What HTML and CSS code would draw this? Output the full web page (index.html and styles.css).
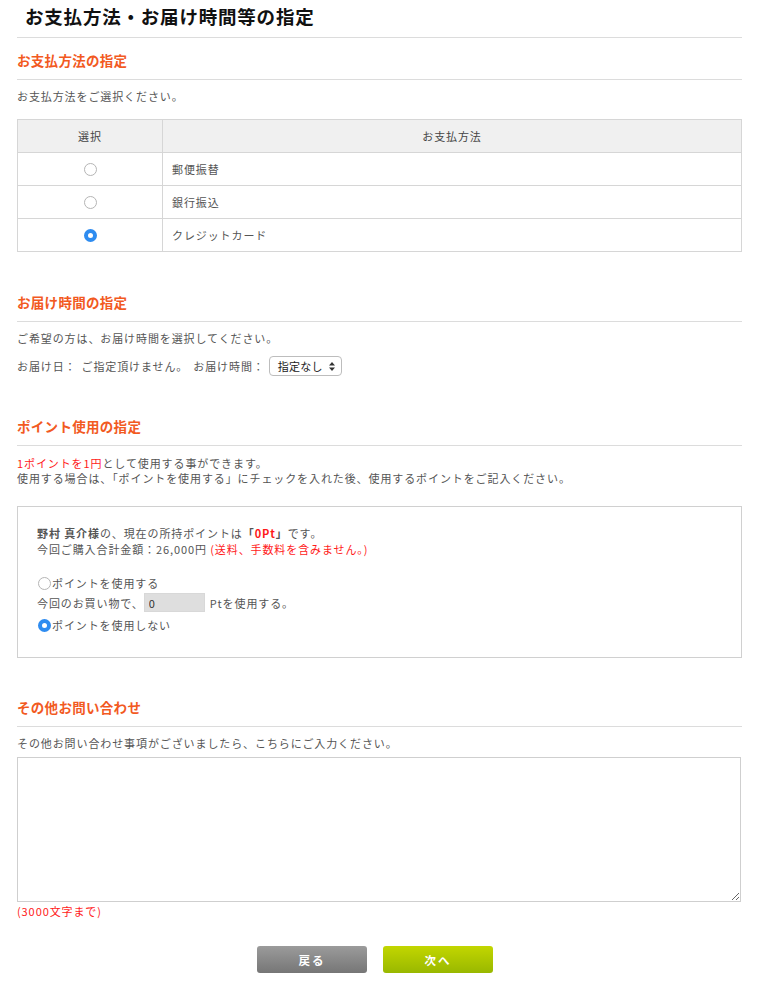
FILE: index.html
```html
<!DOCTYPE html>
<html lang="ja">

<head>
    <meta charset="UTF-8">
    <meta name="viewport" content="width=device-width, initial-scale=1.0">
    <title>お支払方法・お届け時間等の指定</title>
    <link rel="stylesheet" href="styles.css">
</head>

<body>
    <div class="main">
        <h1 class="page_title">お支払方法・お届け時間等の指定</h1>

        <!-- お支払方法 -->
        <div class="section">
            <h2 class="sec_title">お支払方法の指定</h2>
            <p class="note">お支払方法をご選択ください。</p>
            <table class="pay_table">
                <tr>
                    <th class="col_select">選択</th>
                    <th>お支払方法</th>
                </tr>
                <tr>
                    <td class="col_select"><input type="radio" name="payment"></td>
                    <td>郵便振替</td>
                </tr>
                <tr>
                    <td class="col_select"><input type="radio" name="payment"></td>
                    <td>銀行振込</td>
                </tr>
                <tr>
                    <td class="col_select"><input type="radio" name="payment" checked></td>
                    <td>クレジットカード</td>
                </tr>
            </table>
        </div>

        <!-- お届け時間 -->
        <div class="section">
            <h2 class="sec_title">お届け時間の指定</h2>
            <p class="note">ご希望の方は、お届け時間を選択してください。</p>
            <div class="deliv_row">
                <span>お届け日：</span>
                <span class="deliv_date">ご指定頂けません。</span>
                <span class="deliv_time">お届け時間：</span>
                <span class="fake_select">
                    指定なし
                    <svg width="6" height="9" viewBox="0 0 6 9">
                        <path d="M3 0 L6 3.5 L0 3.5 Z M3 9 L6 5.5 L0 5.5 Z" fill="#333" />
                    </svg>
                </span>
            </div>
        </div>

        <!-- ポイント -->
        <div class="section point_sec">
            <h2 class="sec_title">ポイント使用の指定</h2>
            <p class="note">
                <span class="red">1ポイントを1円</span>として使用する事ができます。<br>
                使用する場合は、「ポイントを使用する」にチェックを入れた後、使用するポイントをご記入ください。
            </p>
            <div class="point_box">
                <p class="point_info">
                    <b>野村 真介様</b>の、現在の所持ポイントは<b>「<span class="red">0Pt</span>」</b>です。<br>
                    今回ご購入合計金額：26,000円 <span class="red">(送料、手数料を含みません。)</span>
                </p>
                <label class="point_radio"><input type="radio" name="point">ポイントを使用する</label>
                <div class="point_use">
                    今回のお買い物で、<input type="text" class="point_input" value="0">Ptを使用する。
                </div>
                <label class="point_radio"><input type="radio" name="point" checked>ポイントを使用しない</label>
            </div>
        </div>

        <!-- その他 -->
        <div class="section other_sec">
            <h2 class="sec_title">その他お問い合わせ</h2>
            <p class="note">その他お問い合わせ事項がございましたら、こちらにご入力ください。</p>
            <textarea class="message"></textarea>
            <p class="limit red">(3000文字まで)</p>
        </div>

        <div class="buttons">
            <button class="btn btn_back">戻る</button>
            <button class="btn btn_next">次へ</button>
        </div>
    </div>
</body>

</html>
```

FILE: styles.css
```css
html,
body {
    margin: 0;
    padding: 0;
    background: #fff;
}

:root {
    --theme-color: #f25a1f;
    --text-color: #555;
    --line-color: #dcdcdc;
    --red: #ff1a1a;
}

.main {
    width: 725px;
    padding: 0 19px 0 17px;
    font-family: "Noto Sans CJK JP", "Noto Sans", sans-serif;
    color: var(--text-color);
    font-size: 11px;
    letter-spacing: 0.9px;
}

.page_title {
    margin: 0;
    padding: 5px 0 9px 8px;
    font-size: 18.5px;
    line-height: 23px;
    letter-spacing: 0.8px;
    color: #111;
    border-bottom: 1px solid var(--line-color);
}

.section {
    margin-top: 40px;
}

.section:first-of-type {
    margin-top: 12px;
}

.sec_title {
    margin: 0;
    padding-bottom: 9px;
    font-size: 13.5px;
    line-height: 20px;
    letter-spacing: 0.3px;
    color: var(--theme-color);
    border-bottom: 1px solid var(--line-color);
}

.note {
    margin: 9px 0 0;
    line-height: 15px;
}

.red {
    color: var(--red);
}

/* payment table */
.pay_table {
    width: 100%;
    margin-top: 15px;
    border-collapse: collapse;
    border: 1px solid #d6d6d6;
}

.pay_table th,
.pay_table td {
    height: 32px;
    padding: 0 9px;
    border: 1px solid #d6d6d6;
    font-weight: normal;
    text-align: left;
}

.pay_table th {
    background: #f0f0f0;
    text-align: center;
    color: #444;
}

.pay_table .col_select {
    width: 126px;
    text-align: center;
}

input[type="radio"] {
    appearance: none;
    -webkit-appearance: none;
    width: 13px;
    height: 13px;
    margin: 0;
    border: 1px solid #b5b5b5;
    border-radius: 50%;
    background: #fff;
    vertical-align: middle;
    box-sizing: border-box;
}

input[type="radio"]:checked {
    border: 4px solid #2e8cf0;
    background: #fff;
}

.pay_table input[type="radio"] {
    position: relative;
    top: -1px;
}

/* delivery */
.deliv_row {
    display: flex;
    align-items: center;
    margin-top: 10px;
    height: 20px;
}

.deliv_date {
    margin-left: 5px;
}

.deliv_time {
    margin-left: 5px;
    margin-right: 4px;
}

.fake_select {
    display: inline-flex;
    align-items: center;
    justify-content: space-between;
    box-sizing: border-box;
    width: 73px;
    height: 20px;
    padding: 0 6px 0 8px;
    border: 1px solid #bdbdbd;
    border-radius: 4px;
    background: #fff;
    color: #222;
    letter-spacing: 0.3px;
}

/* point */
.point_sec .note {
    margin-top: 10px;
}

.point_box {
    margin-top: 20px;
    padding: 18px 19px 20px;
    border: 1px solid #d0d0d0;
    height: 112px;
}

.point_info {
    margin: 0;
    line-height: 16px;
}

.point_info b {
    font-weight: bold;
}

.point_radio {
    display: flex;
    align-items: center;
    height: 18px;
}

.point_radio:first-of-type {
    margin-top: 17px;
}

.point_radio input {
    margin: 0 1px 0 1px;
}

.point_use {
    display: flex;
    align-items: center;
    height: 21px;
    margin-bottom: 3px;
}

.point_input {
    box-sizing: border-box;
    width: 61px;
    height: 19px;
    margin: 0 5px 0 0;
    padding: 0 4px;
    border: 1px solid #d8d8d8;
    background: #dedede;
    font-family: inherit;
    font-size: 11px;
    color: #333;
}

/* message */
.other_sec {
    margin-top: 39px;
}

.message {
    display: block;
    box-sizing: border-box;
    width: 724px;
    height: 145px;
    margin-top: 6px;
    border: 1px solid #cfcfcf;
    font-family: inherit;
}

.limit {
    margin: 2px 0 0;
    line-height: 15px;
}

.buttons {
    display: flex;
    justify-content: center;
    gap: 16px;
    margin-top: 27px;
    padding-right: 9px;
}

.btn {
    width: 110px;
    height: 27px;
    border: none;
    border-radius: 3px;
    color: #fff;
    font-family: inherit;
    font-size: 11.5px;
    font-weight: bold;
    letter-spacing: 2px;
    cursor: pointer;
}

.btn_back {
    background: linear-gradient(#9b9b9b, #767676);
}

.btn_next {
    background: linear-gradient(#c2d600, #99b800);
}
```
